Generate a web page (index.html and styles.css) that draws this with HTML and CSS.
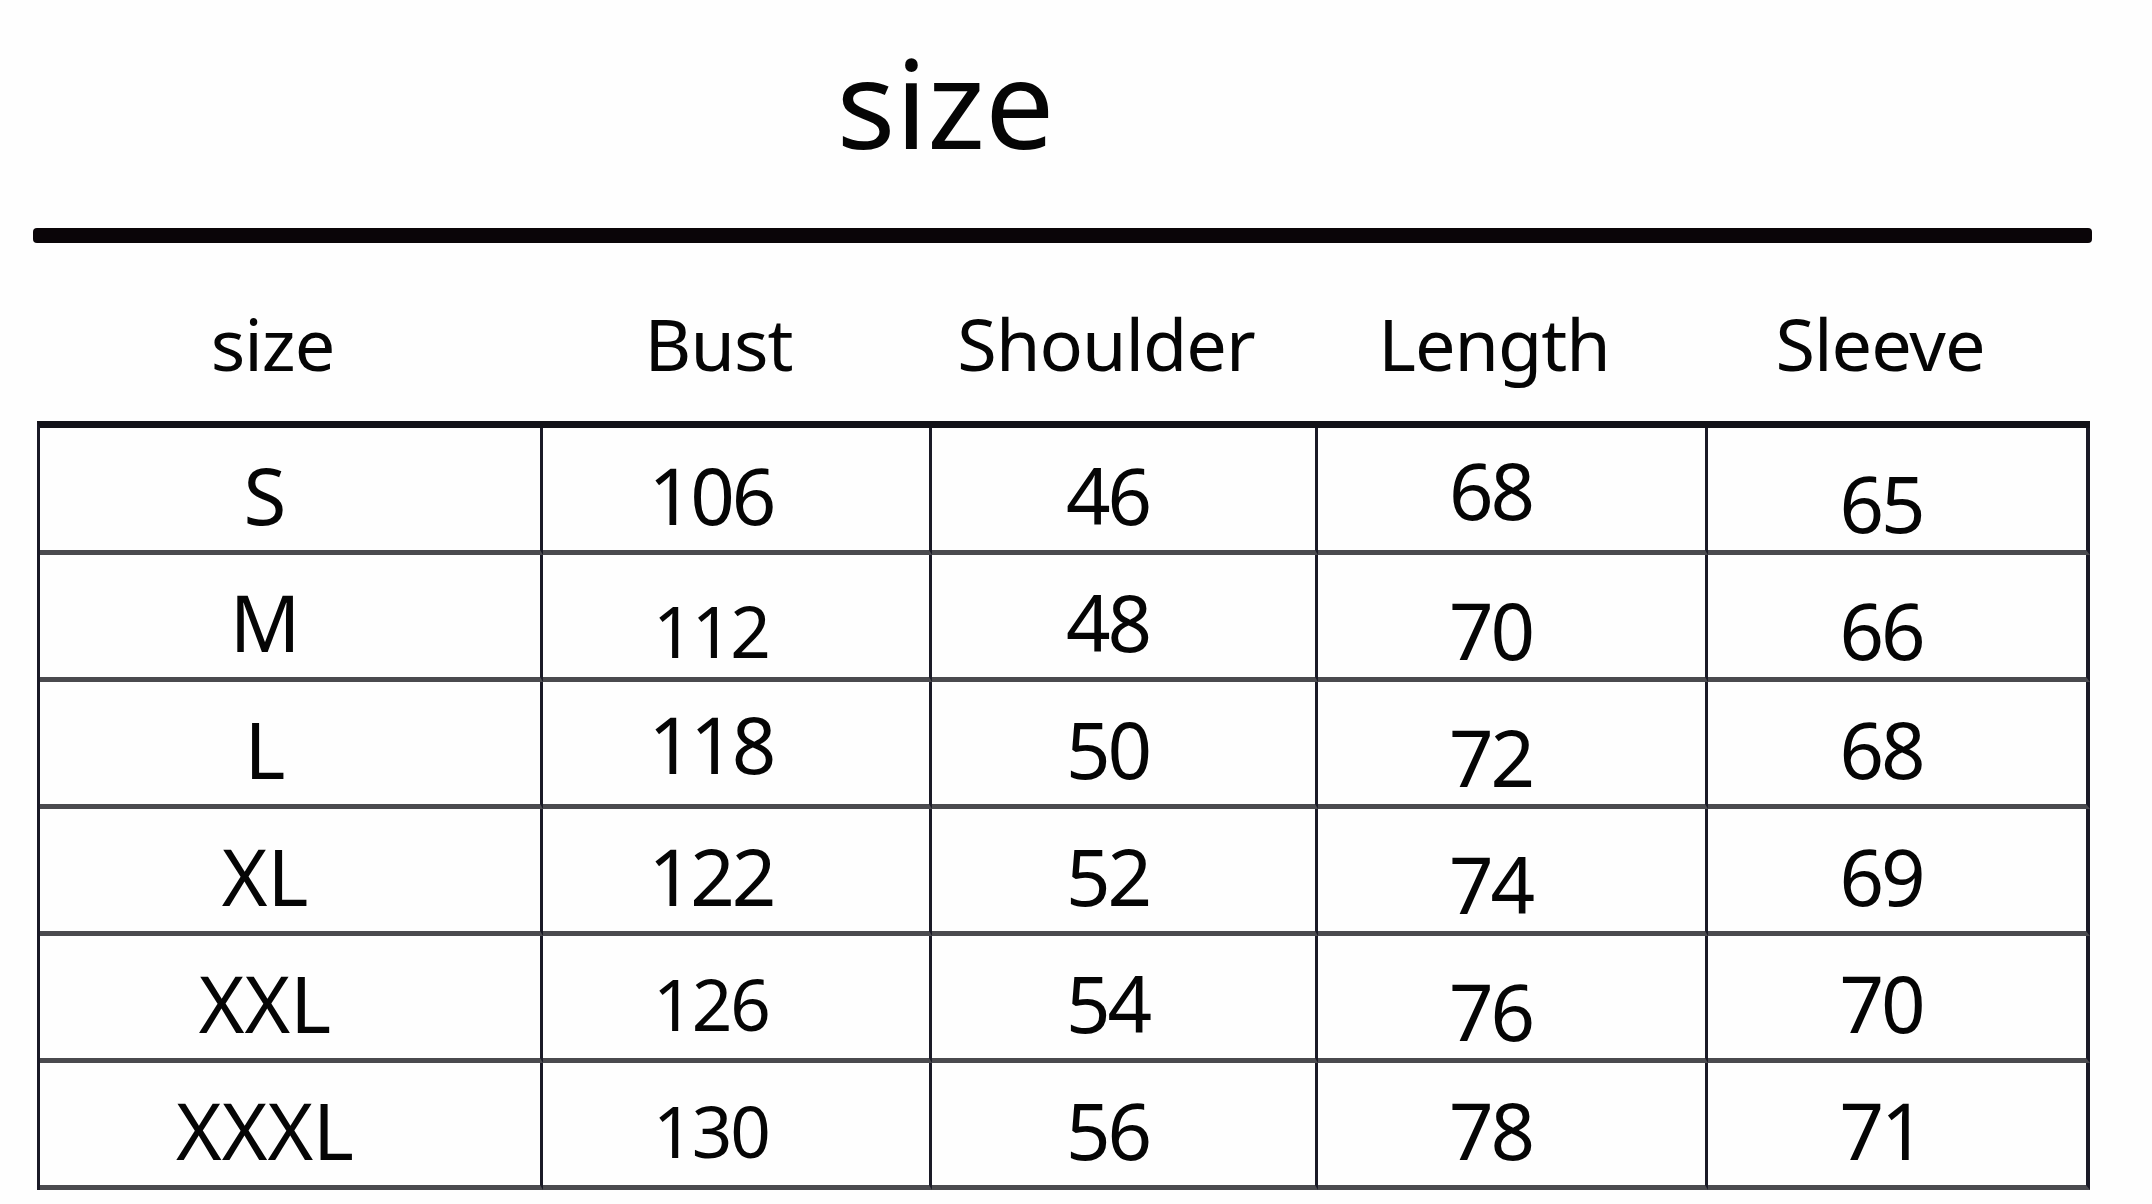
FILE: index.html
```html
<!DOCTYPE html>
<html lang="en">
<head>
<meta charset="utf-8">
<title>size</title>
<link rel="stylesheet" href="styles.css">
</head>
<body>
<main class="sheet">
  <h1 class="title">size</h1>
  <div class="rule"></div>
  <div class="head">
    <div class="hcell">size</div>
    <div class="hcell">Bust</div>
    <div class="hcell">Shoulder</div>
    <div class="hcell">Length</div>
    <div class="hcell">Sleeve</div>
  </div>
  <div class="table">
    <div class="cell">S</div>
    <div class="cell num">106</div>
    <div class="cell num">46</div>
    <div class="cell num up">68</div>
    <div class="cell num dn">65</div>

    <div class="cell">M</div>
    <div class="cell num sm dn">112</div>
    <div class="cell num">48</div>
    <div class="cell num dn">70</div>
    <div class="cell num dn">66</div>

    <div class="cell">L</div>
    <div class="cell num up">118</div>
    <div class="cell num">50</div>
    <div class="cell num dn">72</div>
    <div class="cell num">68</div>

    <div class="cell">XL</div>
    <div class="cell num">122</div>
    <div class="cell num">52</div>
    <div class="cell num dn">74</div>
    <div class="cell num">69</div>

    <div class="cell">XXL</div>
    <div class="cell num sm">126</div>
    <div class="cell num">54</div>
    <div class="cell num dn">76</div>
    <div class="cell num">70</div>

    <div class="cell">XXXL</div>
    <div class="cell num sm">130</div>
    <div class="cell num">56</div>
    <div class="cell num">78</div>
    <div class="cell num">71</div>
  </div>
</main>
</body>
</html>
```

FILE: styles.css
```css
html, body {
  margin: 0;
  padding: 0;
  background: #fefefe;
}

body {
  width: 2152px;
  height: 1204px;
  overflow: hidden;
  font-family: "Noto Sans", "Open Sans", "DejaVu Sans", sans-serif;
  color: #050505;
}

.sheet {
  display: flex;
  flex-direction: column;
}

.title {
  margin: 0;
  padding: 40px 0 0 33px;
  width: 1825px;
  box-sizing: content-box;
  text-align: center;
  font-size: 123px;
  font-weight: 400;
  line-height: 1;
  height: 123px;
}

.rule {
  margin: 65px 0 0 33px;
  width: 2059px;
  height: 15px;
  background: #0a0508;
  border-radius: 4px;
}

.head {
  margin: 64px 0 0 40px;
  display: grid;
  grid-template-columns: 503px 389px 386px 390px 382px;
  font-size: 72px;
  letter-spacing: -1px;
  line-height: 1;
  height: 74px;
}

.hcell {
  text-align: center;
  padding-right: 38px;
}

.table {
  margin: 40px 0 0 37px;
  display: grid;
  grid-template-columns: 503px 389px 386px 390px 382px;
  width: fit-content;
  border-top: 7px solid #121218;
  border-left: 3px solid #1a1a26;
}

.cell {
  box-sizing: border-box;
  height: 127px;
  border-right: 3px solid #1a1a26;
  border-bottom: 5px solid #4a4a4e;
  display: flex;
  align-items: center;
  justify-content: center;
  padding-top: 12px;
  font-size: 78px;
  line-height: 1;
}

.cell:nth-child(5n+1),
.cell:nth-child(5n+2) {
  padding-right: 50px;
}

.cell:nth-child(5n+3),
.cell:nth-child(5n) {
  padding-right: 32px;
}

.cell:nth-child(5n+4) {
  padding-right: 42px;
}

.cell:nth-child(5n) {
  border-right-width: 4px;
}

.cell.num {
  font-size: 78px;
  letter-spacing: -3px;
}

.cell.num.sm {
  font-size: 71px;
  letter-spacing: -2px;
}

.cell.dn {
  padding-top: 28px;
}

.cell.up {
  padding-top: 2px;
}
```
